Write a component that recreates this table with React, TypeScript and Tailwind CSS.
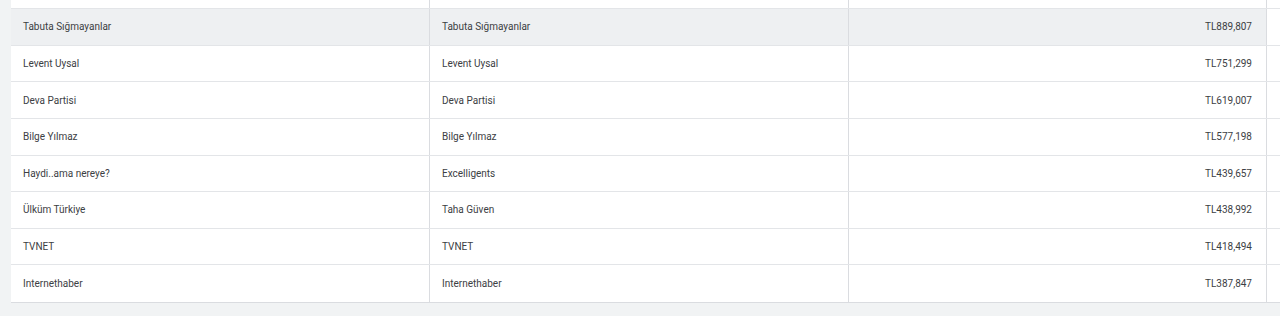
const rows = [
  { name: 'Tabuta Sığmayanlar', owner: 'Tabuta Sığmayanlar', amount: 'TL889,807', active: true },
  { name: 'Levent Uysal', owner: 'Levent Uysal', amount: 'TL751,299' },
  { name: 'Deva Partisi', owner: 'Deva Partisi', amount: 'TL619,007' },
  { name: 'Bilge Yılmaz', owner: 'Bilge Yılmaz', amount: 'TL577,198' },
  { name: 'Haydi..ama nereye?', owner: 'Excelligents', amount: 'TL439,657' },
  { name: 'Ülküm Türkiye', owner: 'Taha Güven', amount: 'TL438,992' },
  { name: 'TVNET', owner: 'TVNET', amount: 'TL418,494' },
  { name: 'Internethaber', owner: 'Internethaber', amount: 'TL387,847' },
];

export default function App() {
  return (
    <div className="w-[1280px] h-[316px] bg-[#f1f3f4] overflow-hidden font-['Roboto',sans-serif] text-[10px] text-[#3c4043]">
      <div className="ml-[11px] bg-white border-b border-[#dadce0]">
        {/* partial row cut off at top */}
        <div className="flex h-[9px] border-b border-[#e3e5e8]">
          <div className="w-[419px] border-r border-[#dadce0]" />
          <div className="w-[419px] border-r border-[#dadce0]" />
          <div className="w-[418px] border-r border-[#dadce0]" />
          <div className="flex-1" />
        </div>
        {rows.map((r) => (
          <div
            key={r.name}
            className={`flex h-[36.625px] border-b border-[#e3e5e8] last:border-b-0 ${r.active ? 'bg-[#eef0f2]' : ''}`}
          >
            <div className="w-[419px] border-r border-[#dadce0] flex items-center pl-[12px]">{r.name}</div>
            <div className="w-[419px] border-r border-[#dadce0] flex items-center pl-[12px]">{r.owner}</div>
            <div className="w-[418px] border-r border-[#dadce0] flex items-center justify-end pr-[14px]">{r.amount}</div>
            <div className="flex-1 bg-white" />
          </div>
        ))}
      </div>
    </div>
  );
}
